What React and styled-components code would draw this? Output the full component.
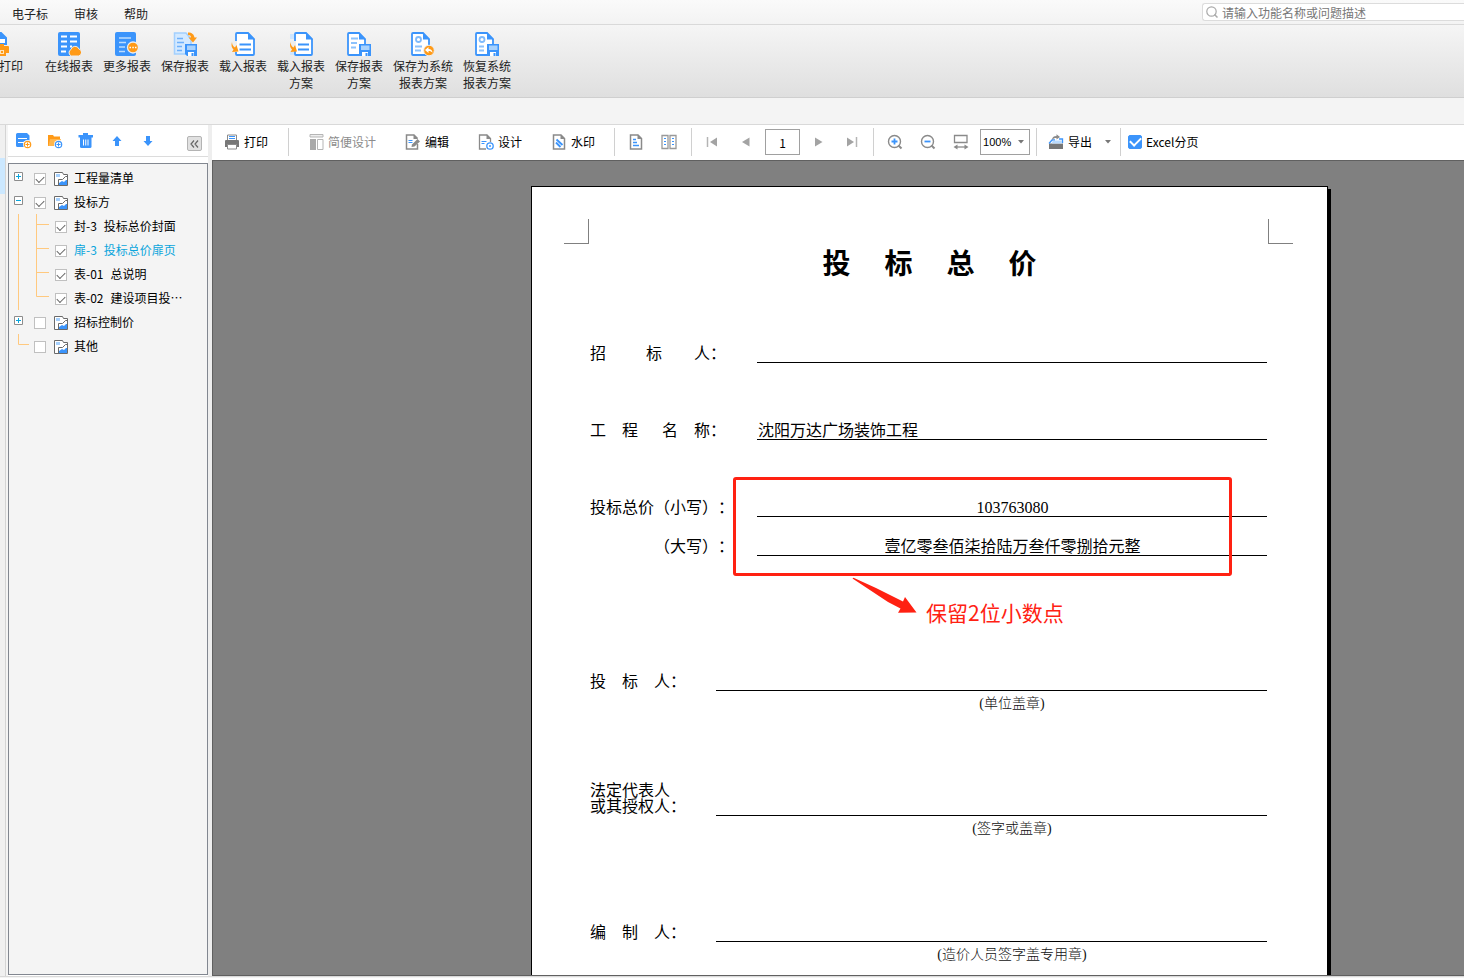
import React, { useState } from 'react';
import styled, { createGlobalStyle } from 'styled-components';

const BLUE = '#3b94fb';
const ORANGE = '#ff9a17';
const GREY = '#8a8a8a';

const GlobalStyle = createGlobalStyle`
  * {
    box-sizing: border-box;
  }

  body {
    margin: 0;
    background: #f4f4f4;
    color: #000;
    font-family: "Noto Sans CJK SC", "Noto Sans", sans-serif;
    font-size: 12px;
  }

  button, input, select {
    margin: 0;
    padding: 0;
    border: 0;
    background: none;
    color: inherit;
    font: inherit;
  }

  svg {
    display: block;
    flex: none;
  }
`;

const ScApp = styled.div`
  display: flex;
  flex-direction: column;
  height: 100vh;
  overflow: hidden;
`;

/* menu bar */

const MenuBar = styled.header`
  display: flex;
  flex: none;
  align-items: center;
  height: 25px;
  padding-left: 12px;
  border-bottom: 1px solid #d9d9d9;
  background: linear-gradient(#fafafa, #f3f3f3);
`;

const MenuNav = styled.nav`
  display: flex;
  gap: 26px;
  padding-top: 4px;
`;

const MenuItem = styled.button`
  line-height: 18px;
  color: #222;
`;

const Search = styled.label`
  display: flex;
  align-items: center;
  gap: 4px;
  width: 262px;
  height: 18px;
  margin-left: auto;
  padding-left: 3px;
  border: 1px solid #dcdcdc;
  border-right: 0;
  border-radius: 3px 0 0 3px;
  background: #fff;

  input {
    flex: 1;
    min-width: 0;
    height: 16px;
    outline: 0;
    &::placeholder {
      color: #777;
    }
  }
`;

/* ribbon */

const Ribbon = styled.div`
  display: flex;
  flex: none;
  height: 73px;
  border-bottom: 1px solid #cfcfcf;
  background: linear-gradient(#f5f5f5, #dfdfdf);
`;

const RibbonButton = styled.button`
  display: flex;
  flex: none;
  flex-direction: column;
  align-items: center;
  gap: 1px;
  width: ${({ $wide }) => ($wide ? '70px' : '58px')};
  padding-top: 7px;
  line-height: 17px;
  color: #222;
  white-space: pre-line;
`;

const CutRibbonButton = styled(RibbonButton)`
  align-items: flex-start;
  width: 41px;
  margin-left: -1px;
`;

const Strip = styled.div`
  flex: none;
  height: 27px;
  border-bottom: 1px solid #d9d9d9;
  background: #f4f4f4;
`;

/* workspace */

const Workspace = styled.main`
  display: flex;
  flex: 1;
  min-height: 0;
`;

const Rail = styled.div`
  flex: none;
  width: 6px;
  margin-right: 2px;
  padding-top: 33px;
  border-right: 1px solid #d4d4d4;
  background: #f0f0f0;

  &::before {
    display: block;
    height: 36px;
    background: #cce8ff;
    content: '';
  }
`;

const Sidebar = styled.aside`
  display: flex;
  flex: none;
  flex-direction: column;
  width: 200px;
  background: #fff;
`;

const SidebarTools = styled.div`
  display: flex;
  align-items: center;
  gap: 15px;
  height: 32px;
  margin-bottom: 6px;
  padding: 0 6px 0 8px;
  border-bottom: 1px solid #dcdcdc;
`;

const CollapseButton = styled.button`
  display: grid;
  place-items: center;
  width: 15px;
  height: 15px;
  margin: 6px 0 0 auto;
  border: 1px solid #b4b4b4;
  border-radius: 2px;
  background: #e1e1e1;
`;

const Tree = styled.ul`
  flex: 1;
  margin: 0 0 1px;
  padding: 2px 0 0;
  border: 1px solid #828790;
  background: #f4f4f4;
  list-style: none;
`;

const TreeRow = styled.li`
  display: flex;
  align-items: center;
  height: 24px;
  color: ${({ $active }) => ($active ? '#0aa5dc' : '#000')};

  > label {
    display: flex;
    align-items: center;
    line-height: 24px;
    white-space: nowrap;
  }
`;

const TreeCheck = styled.input.attrs({ type: 'checkbox' })`
  display: grid;
  flex: none;
  place-items: center;
  width: 12px;
  height: 12px;
  margin-top: 2px;
  border: 1px solid #c0c0c0;
  background: #fff;
  appearance: none;

  &:checked::after {
    width: 7px;
    height: 4px;
    margin-bottom: 2px;
    border: solid #666;
    border-width: 0 0 1px 1px;
    transform: rotate(-45deg);
    content: '';
  }
`;

const GroupName = styled.span`
  display: flex;
  align-items: center;
  gap: 6px;
  padding-left: 8px;

  svg {
    margin-top: 2px;
  }
`;

const SheetName = styled.span`
  display: flex;
  gap: 7px;
  padding-left: 7px;
`;

const Preview = styled.section`
  display: flex;
  flex: 1;
  flex-direction: column;
  min-width: 0;
  border-left: 4px solid #eee;
`;

/* preview toolbar */

const Toolbar = styled.div`
  display: flex;
  flex: none;
  align-items: center;
  height: 35px;
  padding-bottom: 1px;
  background: #fff;
`;

const ToolGroup = styled.div`
  display: flex;
  align-items: center;
  gap: ${({ $gap }) => $gap || 17}px;
  height: 28px;
  padding: ${({ $pad }) => $pad || '0 13px'};
  border-right: 1px solid #d0d0d0;

  &:last-child {
    border-right: 0;
  }
`;

const ToolButton = styled.button`
  display: flex;
  align-items: center;
  gap: 4px;
  line-height: 18px;
  white-space: nowrap;

  &:disabled {
    color: #8c8c8c;
  }
`;

const PageInput = styled.input`
  width: 35px;
  height: 26px;
  margin: 0 -6px;
  border: 1px solid #a0a0a0;
  text-align: center;
`;

const ZoomBox = styled.div`
  display: flex;
  align-items: center;
  width: 50px;
  height: 26px;
  margin-left: -6px;
  padding: 0 5px 0 2px;
  border: 1px solid #a0a0a0;

  select {
    flex: 1;
    min-width: 0;
    outline: 0;
    font-family: "Liberation Sans", sans-serif;
    font-size: 11px;
    appearance: none;
  }

  svg {
    pointer-events: none;
  }
`;

const PagingOption = styled.label`
  display: flex;
  align-items: center;
  gap: 4px;
  line-height: 18px;
  white-space: nowrap;

  input {
    display: grid;
    place-items: center;
    width: 14px;
    height: 14px;
    border: 1px solid ${BLUE};
    border-radius: 2px;
    appearance: none;
  }

  input:checked {
    background: ${BLUE};
  }

  input:checked::after {
    width: 9px;
    height: 5px;
    margin-bottom: 3px;
    border: solid #fff;
    border-width: 0 0 2px 2px;
    transform: rotate(-45deg);
    content: '';
  }
`;

/* report page */

const Canvas = styled.div`
  flex: 1;
  min-height: 0;
  padding: 25px 0 25px 318px;
  overflow: auto;
  border: solid #606060;
  border-width: 1px 0 1px 1px;
  background: #808080;
  scrollbar-width: none;
`;

const Sheet = styled.article`
  position: relative;
  width: 797px;
  min-height: 1123px;
  padding-top: 32px;
  border: 1px solid #000;
  background: #fff;
  box-shadow: 3px 3px 0 #000;
  font-family: "Liberation Serif", "Noto Sans CJK SC", serif;
  font-size: 16px;
  text-spacing-trim: space-all;
`;

const Marks = styled.div`
  display: flex;
  justify-content: space-between;
  padding: 0 34px 0 32px;
`;

const Mark = styled.span`
  width: 25px;
  height: 25px;
  border: solid #808080;
  border-width: ${({ $side }) => ($side === 'left' ? '0 1px 1px 0' : '0 0 1px 1px')};
`;

const Title = styled.h1`
  display: flex;
  justify-content: center;
  gap: 34px;
  margin: 3px 0 60px;
  font-size: 28px;
  font-weight: 700;
  line-height: 36px;
`;

const Form = styled.div`
  padding: 0 60px 0 58px;
`;

const FormRow = styled.div`
  display: grid;
  grid-template-columns: ${({ $signed }) => ($signed ? '126px' : '167px')} 1fr;
  align-items: end;
  min-height: 20px;
  margin-top: ${({ $space }) => $space || 0}px;
`;

const FormLabel = styled.span`
  padding-bottom: 1px;
  line-height: 16px;
  white-space: pre;

  &.indent {
    padding-left: 64px;
  }
`;

const FormValue = styled.span`
  height: 20px;
  padding-left: 1px;
  border-bottom: 1px solid #000;
  line-height: 22px;
  text-align: ${({ $center }) => ($center ? 'center' : 'left')};
`;

const Note = styled.p`
  height: 24px;
  margin: 0;
  padding-left: 167px;
  color: #111;
  font-size: 14px;
  font-weight: 300;
  line-height: 26px;
  text-align: center;
`;

/* the red review marks lie over the report */

const ReviewBox = styled.div`
  position: absolute;
  top: 290px;
  left: 201px;
  width: 499px;
  height: 99px;
  border: 3px solid #ff2112;
  border-radius: 3px;
`;

const ReviewNote = styled.div`
  position: absolute;
  top: 390px;
  left: 320px;
  display: flex;
  gap: 8px;
  color: #ff2112;
  font-family: "Noto Sans CJK SC", sans-serif;
  font-size: 21px;
  line-height: 30px;

  span {
    padding-top: 20px;
  }
`;

const StatusEdge = styled.footer`
  flex: none;
  height: 2px;
  border-top: 1px solid #d9d9d9;
  background: #f4f4f4;
`;

/* 24px ribbon icons */

const Icon24 = ({ children, width = 24, viewBox = '0 0 24 24' }) => (
    <svg width={width} height="24" viewBox={viewBox} fill="none" aria-hidden="true">{children}</svg>
);

const Floppy = () => (
    <g>
        <path d="M12 12h12v12H14l-2-2z" fill={BLUE} />
        <path d="M14 13.500h8.500v4.500H14z" fill="#a8d2fd" />
        <path d="M15 20h6v4h-6z" fill="#fff" />
        <path d="M18.500 21h2v3h-2z" fill={BLUE} />
    </g>
);

const Paper = ({ x = 0, w = 18 }) => (
    <g>
        <path d={`M${x + 2} 1h${w - 8}l6 6v15a1 1 0 0 1-1 1h-${w - 3}a1 1 0 0 1-1-1V2a1 1 0 0 1 1-1z`} fill="#fff" stroke={BLUE} strokeWidth="1.800" />
        <path d={`M${x + w - 6} 0.500v7h7z`} fill={BLUE} />
    </g>
);

const LoadArrow = ({ x = 0 }) => (
    <path d={`M${x + 0.5} 10c0 3 1.500 4.500 3 5.500l1.500-2.500 2 6.500-6.500.5 1.500-2.500C${x} 16 ${x - 0.5} 13 ${x + 0.5} 10z`} fill={ORANGE} />
);

const PrintIcon = () => (
    <Icon24 width={11} viewBox="13 0 11 24">
        <path d="M4 1h11l5 5v6H4z" fill="#fff" stroke={BLUE} strokeWidth="2" />
        <path d="M14 0v7h7z" fill={BLUE} />
        <path d="M4 12h14v2h4a1 1 0 0 1 1 1v6h-3v3H4z" fill={ORANGE} />
        <path d="M8 18h10v4H8z" fill="#ffe3b8" />
        <path d="M15 19h2v2h-2z" fill={ORANGE} />
    </Icon24>
);

const OnlineIcon = () => (
    <Icon24>
        <rect x="1" width="22" height="24" rx="2" fill={BLUE} />
        <path d="M4 4.500h6M13 4.500h7M4 9.500h6M13 9.500h7M4 14.500h6M4 19.500h5M13 14.500h2" stroke="#fff" strokeWidth="2" />
        <path d="M14.500 24a3.500 3.500 0 0 1-.5-6.500 4.200 4.200 0 0 1 8-.5 3.600 3.600 0 0 1-.5 7z" fill={ORANGE} stroke="#eee" strokeWidth="1" />
    </Icon24>
);

const MoreIcon = () => (
    <Icon24>
        <rect width="21" height="24" rx="2" fill={BLUE} />
        <path d="M4 6h12M4 10.500h7M4 15h6M4 19.500h6" stroke="#bcdcfe" strokeWidth="1.500" />
        <circle cx="18" cy="15.500" r="5.500" fill={ORANGE} stroke="#eee" strokeWidth="1.300" />
        <path d="M14.500 15.500h1.500M17.300 15.500h1.500M20 15.500h1.500" stroke="#fff" strokeWidth="1.600" />
    </Icon24>
);

const SaveReportIcon = () => (
    <Icon24>
        <path d="M1.500 1H13l5 6v15H1.500z" fill="#d3e9ff" stroke="#a3d0fe" strokeWidth="1.500" />
        <path d="M4 6.500h6M4 10.500h7M4 14.500h5M4 18.500h5" stroke="#6db0fb" strokeWidth="1.500" />
        <path d="M15 .5c4 0 6 2 6.500 5H24L20 10.500 15.500 5.500H18c-.3-1.800-1-2.500-3-2.500z" fill={ORANGE} />
        <Floppy />
    </Icon24>
);

const LoadReportIcon = () => (
    <Icon24>
        <Paper x={4} w={19} />
        <path d="M8.500 12.500H20M8.500 17.500H20" stroke={BLUE} strokeWidth="1.800" />
        <path d="M0 9h6v11H0z" fill="#eee" />
        <LoadArrow x={0.5} />
    </Icon24>
);

const LoadPlanIcon = () => (
    <Icon24>
        <path d="M1 2h4v5H1zM1 20h5v3H1z" fill="#cfe6fe" />
        <Paper x={5} w={18} />
        <path d="M9 12.500h11M9 17.500h11" stroke={BLUE} strokeWidth="1.800" />
        <path d="M1 9h6v10H1z" fill="#eee" />
        <LoadArrow x={1} />
    </Icon24>
);

const SavePlanIcon = () => (
    <Icon24>
        <Paper />
        <path d="M4 6.500h7M4 11h6M4 15.500h5" stroke="#8cc2fc" strokeWidth="1.800" />
        <Floppy />
    </Icon24>
);

const SaveSystemIcon = () => (
    <Icon24>
        <Paper />
        <circle cx="7.500" cy="7.500" r="2.500" stroke="#7fbafb" strokeWidth="1.800" />
        <path d="M4 14.500h7M4 18.500h6" stroke="#8cc2fc" strokeWidth="1.800" />
        <circle cx="18" cy="18.500" r="5.300" fill={ORANGE} stroke="#eee" />
        <path d="M14 18l3.500-3v2c2.500 0 4 1.500 4 4-1-1.500-2-2-4-2v2z" fill="#fff" />
    </Icon24>
);

const RestoreIcon = () => (
    <Icon24>
        <Paper />
        <circle cx="7" cy="7.500" r="2.500" stroke="#7fbafb" strokeWidth="1.800" />
        <path d="M4 14.500h5M4 18.500h5" stroke="#8cc2fc" strokeWidth="1.800" />
        <Floppy />
    </Icon24>
);

/* 16px toolbar icons */

const Icon16 = ({ children }) => (
    <svg width="16" height="16" viewBox="0 0 16 16" fill="none" aria-hidden="true">{children}</svg>
);

const GreyPaper = () => (
    <g>
        <path d="M2.500 1h7.500l3.500 3.500V15h-11z" stroke={GREY} strokeWidth="1.500" />
        <path d="M9.500.5v4.500H14z" fill={GREY} />
    </g>
);

const icons = {
    addReport: (
        <Icon16>
            <path d="M0 1.500A1.500 1.500 0 0 1 1.500 0H11l2.500 2.500V14H1.500A1.500 1.500 0 0 1 0 12.500z" fill={BLUE} />
            <path d="M2 5.500h9M2 9.500h6" stroke="#fff" />
            <circle cx="11.500" cy="11.500" r="4.500" fill="#fff" />
            <circle cx="11.500" cy="11.500" r="3.200" fill="#fff" stroke={ORANGE} strokeWidth="1.200" />
            <path d="M9.500 11.500h4M11.500 9.500v4" stroke={ORANGE} />
        </Icon16>
    ),
    addFolder: (
        <Icon16>
            <path d="M1 2h5l1 1.500h6V13H1z" fill={ORANGE} />
            <path d="M3 6h11l-2 7H1.500z" fill="#ffb64d" />
            <circle cx="11.500" cy="11.500" r="4.500" fill="#fff" />
            <circle cx="11.500" cy="11.500" r="3.200" fill="#fff" stroke={BLUE} strokeWidth="1.200" />
            <path d="M9.500 11.500h4M11.500 9.500v4" stroke={BLUE} />
        </Icon16>
    ),
    trash: (
        <Icon16>
            <path d="M5 0h5v2h5v2.500H.5V2H5z" fill={BLUE} />
            <path d="M2 4h11.500v9.500a1.500 1.500 0 0 1-1.500 1.500H3.500A1.500 1.500 0 0 1 2 13.500z" fill={BLUE} />
            <path d="M5.500 6.500v6M7.750 6.500v6M10 6.500v6" stroke="#fff" />
        </Icon16>
    ),
    up: (
        <Icon16>
            <path d="M8 3l4.500 5H10v5H6V8H3.500z" fill={BLUE} />
        </Icon16>
    ),
    down: (
        <Icon16>
            <path d="M8 13l4.500-5H10V3H6v5H3.500z" fill={BLUE} />
        </Icon16>
    ),
    print: (
        <Icon16>
            <path d="M3.500 6V1h9v5" fill="#fff" stroke={GREY} />
            <path d="M5 2.500h6M5 4.500h6" stroke={BLUE} />
            <path d="M1 7a1 1 0 0 1 1-1h12a1 1 0 0 1 1 1v6H1z" fill="#777" />
            <path d="M3.500 10.500h9v4.500h-9z" fill="#fff" stroke={GREY} />
        </Icon16>
    ),
    layout: (
        <Icon16>
            <path d="M2 .5h13v2.500H2z" fill="#eee" stroke="#b5b5b5" />
            <path d="M2 5h6v11H2z" fill="#a9a9a9" />
            <path d="M9.500 5.500H15v10H9.500z" stroke="#b5b5b5" />
        </Icon16>
    ),
    edit: (
        <Icon16>
            <path d="M12.500 10v5h-11V1H9l3.500 3.500" stroke={GREY} strokeWidth="1.500" />
            <path d="M8.500.5V5H13z" fill={GREY} />
            <path d="M3.500 6.500h4M3.500 8.500h4" stroke={BLUE} />
            <path d="M6.500 13l.5-2.500L12.500 5 15 7.500 9.500 12.500z" fill={GREY} />
        </Icon16>
    ),
    design: (
        <Icon16>
            <path d="M8 15H1.500V1H9l3.500 3.500V8" stroke={GREY} strokeWidth="1.300" />
            <path d="M8.500.5V5H13z" fill={GREY} />
            <path d="M3.500 7.500h5M3.500 9.500h3" stroke={BLUE} />
            <circle cx="12" cy="12" r="3.200" stroke={BLUE} strokeWidth="1.300" />
            <circle cx="12" cy="12" r="1" fill={BLUE} />
        </Icon16>
    ),
    watermark: (
        <Icon16>
            <GreyPaper />
            <path d="M5.500 5.500l6 5.500M5 8.500l4.500 4.500" stroke={BLUE} strokeWidth="1.900" />
        </Icon16>
    ),
    single: (
        <Icon16>
            <GreyPaper />
            <path d="M5 5.500h3M5 8.500h4M5 11.500h6" stroke={BLUE} strokeWidth="1.500" />
        </Icon16>
    ),
    dual: (
        <Icon16>
            <path d="M1 1.500h6v13H1zM9 1.500h6v13H9z" stroke="#999" strokeWidth="1.300" />
            <path d="M3 4.500h2M3 7.500h2M3 10.500h2M11 4.500h2M11 7.500h2M11 10.500h2" stroke={BLUE} strokeWidth="1.200" />
        </Icon16>
    ),
    first: (
        <Icon16>
            <path d="M2.500 3v10" stroke="#b4b4b4" strokeWidth="1.500" />
            <path d="M12 3.500v9L5 8z" fill="#a3a3a3" />
        </Icon16>
    ),
    prev: (
        <Icon16>
            <path d="M11.500 3.500v9L4 8z" fill="#a3a3a3" />
        </Icon16>
    ),
    next: (
        <Icon16>
            <path d="M4 3.500v9L11.500 8z" fill="#a3a3a3" />
        </Icon16>
    ),
    last: (
        <Icon16>
            <path d="M12.500 3v10" stroke="#b4b4b4" strokeWidth="1.500" />
            <path d="M3 3.500v9L10 8z" fill="#a3a3a3" />
        </Icon16>
    ),
    zoomIn: (
        <Icon16>
            <circle cx="7.500" cy="7.500" r="6" stroke={GREY} strokeWidth="1.400" />
            <path d="M11.500 11.500l3 3" stroke={GREY} strokeWidth="2" />
            <path d="M4.500 7.500h6M7.500 4.500v6" stroke={BLUE} strokeWidth="1.800" />
        </Icon16>
    ),
    zoomOut: (
        <Icon16>
            <circle cx="7.500" cy="7.500" r="6" stroke={GREY} strokeWidth="1.400" />
            <path d="M11.500 11.500l3 3" stroke={GREY} strokeWidth="2" />
            <path d="M4.500 7.500h6" stroke={BLUE} strokeWidth="1.800" />
        </Icon16>
    ),
    fit: (
        <Icon16>
            <path d="M1.500 1.500h12.500v7H1.500z" stroke={GREY} strokeWidth="1.300" />
            <path d="M3 13h10" stroke={GREY} strokeWidth="1.300" />
            <path d="M.5 13l4-2.500v5zM15.500 13l-4-2.500v5z" fill={GREY} />
        </Icon16>
    ),
    exportFile: (
        <Icon16>
            <path d="M1 9.500h14V15H1z" fill="#777" />
            <path d="M1 9.500L4 6h3M14.500 9V5H11" stroke={BLUE} strokeWidth="1.300" />
            <path d="M4 8.500l1-2h9v3H4z" fill="#b9dafd" />
            <path d="M4 6c0-2.500 1.500-4 4.500-4V.2L12 3 8.500 5.500V4C6.500 4 5.500 4.500 4 6z" fill={GREY} />
        </Icon16>
    ),
};

const Caret = () => (
    <svg width="6" height="4" viewBox="0 0 6 4" aria-hidden="true">
        <path d="M0 0h6L3 3.500z" fill="#777" />
    </svg>
);

const GroupIcon = () => (
    <svg width="14" height="14" viewBox="0 0 14 14" fill="none" aria-hidden="true">
        <path d="M.5 .5h8l1 2h4v11H.5z" fill="#fff" stroke="#6a6a6a" />
        <path d="M2 2h4v3H2z" fill="#a5d0fd" />
        <path d="M4.500 13V7.500h4l3-3H13" stroke="#6a6a6a" />
        <path d="M5 13v-2l3-2 2 1 2-2h1v5z" fill={BLUE} />
    </svg>
);

const Branch = ({ type }) => (
    <svg width="25" height="24" viewBox="0 0 25 24" fill="none" aria-hidden="true">
        {(type === 'plus' || type === 'minus') && (
            <g>
                <path d="M5.500 6.500h8v8h-8z" fill="#fff" stroke="#8c8c8c" />
                <path d={type === 'plus' ? 'M7 10.500h5M9.500 8v5' : 'M7 10.500h5'} stroke="#0aa5dc" />
            </g>
        )}
        {type === 'line' && <path d="M9.500 0v24" stroke="#ffc97f" />}
        {type === 'elbow' && <path d="M9.500 0v10.500H20" stroke="#ffc97f" />}
    </svg>
);

const SubBranch = ({ last }) => (
    <svg width="21" height="24" viewBox="0 0 21 24" fill="none" aria-hidden="true">
        <path d={last ? 'M2.500 0v10.500H15' : 'M2.500 0v24M2.500 10.500H15'} stroke="#ffc97f" />
    </svg>
);

const ribbonItems = [
    { label: '在线报表', icon: <OnlineIcon /> },
    { label: '更多报表', icon: <MoreIcon /> },
    { label: '保存报表', icon: <SaveReportIcon /> },
    { label: '载入报表', icon: <LoadReportIcon /> },
    { label: '载入报表\n方案', icon: <LoadPlanIcon /> },
    { label: '保存报表\n方案', icon: <SavePlanIcon /> },
    { label: '保存为系统\n报表方案', icon: <SaveSystemIcon />, wide: true },
    { label: '恢复系统\n报表方案', icon: <RestoreIcon /> },
];

const treeItems = [
    { name: '工程量清单', branch: 'plus', checked: true },
    { name: '投标方', branch: 'minus', checked: true },
    { code: '封-3', name: '投标总价封面', checked: true },
    { code: '扉-3', name: '投标总价扉页', checked: true, active: true },
    { code: '表-01', name: '总说明', checked: true },
    { code: '表-02', name: '建设项目投…', checked: true, last: true },
    { name: '招标控制价', branch: 'plus', checked: false },
    { name: '其他', branch: 'elbow', checked: false },
];

const IconButton = ({ icon, label }) => (
    <ToolButton type="button" aria-label={label}>{icons[icon]}</ToolButton>
);

const TreeItem = ({ item }) => {
    const [checked, setChecked] = useState(item.checked);
    const box = <TreeCheck checked={checked} onChange={() => setChecked(!checked)} />;

    if (item.code) {
        return (
            <TreeRow $active={item.active}>
                <Branch type="line" />
                <SubBranch last={item.last} />
                <label>
                    {box}
                    <SheetName><span>{item.code}</span><span>{item.name}</span></SheetName>
                </label>
            </TreeRow>
        );
    }
    return (
        <TreeRow>
            <Branch type={item.branch} />
            <label>
                {box}
                <GroupName><GroupIcon />{item.name}</GroupName>
            </label>
        </TreeRow>
    );
};

const ReportSheet = () => (
    <Sheet>
        <Marks>
            <Mark $side="left" />
            <Mark $side="right" />
        </Marks>
        <Title><span>投</span><span>标</span><span>总</span><span>价</span></Title>
        <Form>
            <FormRow>
                <FormLabel>{'招\u3000\u3000  标\u3000\u3000人：'}</FormLabel>
                <FormValue />
            </FormRow>
            <FormRow $space={57}>
                <FormLabel>{'工\u3000程\u3000  名\u3000称：'}</FormLabel>
                <FormValue>沈阳万达广场装饰工程</FormValue>
            </FormRow>
            <FormRow $space={57}>
                <FormLabel>投标总价（小写）：</FormLabel>
                <FormValue $center>103763080</FormValue>
            </FormRow>
            <FormRow $space={19}>
                <FormLabel className="indent">（大写）：</FormLabel>
                <FormValue $center>壹亿零叁佰柒拾陆万叁仟零捌拾元整</FormValue>
            </FormRow>
            <FormRow $signed $space={115}>
                <FormLabel>{'投\u3000标\u3000人：'}</FormLabel>
                <FormValue />
            </FormRow>
            <Note>(单位盖章)</Note>
            <FormRow $signed $space={68}>
                <FormLabel>{'法定代表人\n或其授权人：'}</FormLabel>
                <FormValue />
            </FormRow>
            <Note>(签字或盖章)</Note>
            <FormRow $signed $space={82}>
                <FormLabel>{'编\u3000制\u3000人：'}</FormLabel>
                <FormValue />
            </FormRow>
            <Note>(造价人员签字盖专用章)</Note>
        </Form>
        <ReviewBox />
        <ReviewNote>
            <svg width="66" height="37" viewBox="0 0 66 37" aria-hidden="true">
                <path d="M.5 1.500L1.500 .8 24 11 51 24.500l2-4.500 11.500 15.500-18.500 .3 2.500-4.300L36 25z" fill="#ff2112" />
            </svg>
            <span>保留2位小数点</span>
        </ReviewNote>
    </Sheet>
);

const App = () => {
    const [page, setPage] = useState('1');
    const [paging, setPaging] = useState(true);

    return (
        <ScApp>
            <GlobalStyle />
            <MenuBar>
                <MenuNav>
                    <MenuItem type="button">电子标</MenuItem>
                    <MenuItem type="button">审核</MenuItem>
                    <MenuItem type="button">帮助</MenuItem>
                </MenuNav>
                <Search>
                    <svg width="12" height="12" viewBox="0 0 12 12" fill="none" aria-hidden="true">
                        <circle cx="5.500" cy="5.500" r="4.700" stroke="#aaa" strokeWidth="1.200" />
                        <path d="M8.500 8.500l3 3" stroke="#aaa" strokeWidth="1.500" />
                    </svg>
                    <input type="text" aria-label="搜索" placeholder="请输入功能名称或问题描述" />
                </Search>
            </MenuBar>
            <Ribbon>
                <CutRibbonButton type="button"><PrintIcon />打印</CutRibbonButton>
                {ribbonItems.map(({ label, icon, wide }) => (
                    <RibbonButton key={label} type="button" $wide={wide}>{icon}{label}</RibbonButton>
                ))}
            </Ribbon>
            <Strip />
            <Workspace>
                <Rail />
                <Sidebar>
                    <SidebarTools>
                        <IconButton icon="addReport" label="新建报表" />
                        <IconButton icon="addFolder" label="新建文件夹" />
                        <IconButton icon="trash" label="删除" />
                        <IconButton icon="up" label="上移" />
                        <IconButton icon="down" label="下移" />
                        <CollapseButton type="button" aria-label="收起">
                            <svg width="9" height="8" viewBox="0 0 9 8" fill="none" aria-hidden="true">
                                <path d="M4 .5L1 4l3 3.500M8 .5L5 4l3 3.500" stroke="#666" strokeWidth="1.200" />
                            </svg>
                        </CollapseButton>
                    </SidebarTools>
                    <Tree>
                        {treeItems.map((item) => <TreeItem key={item.name} item={item} />)}
                    </Tree>
                </Sidebar>
                <Preview>
                    <Toolbar>
                        <ToolGroup $pad="0 20px 0 12px">
                            <ToolButton type="button">{icons.print}打印</ToolButton>
                        </ToolGroup>
                        <ToolGroup $gap={29} $pad="0 19px">
                            <ToolButton type="button" disabled>{icons.layout}简便设计</ToolButton>
                            <ToolButton type="button">{icons.edit}编辑</ToolButton>
                            <ToolButton type="button">{icons.design}设计</ToolButton>
                            <ToolButton type="button">{icons.watermark}水印</ToolButton>
                        </ToolGroup>
                        <ToolGroup $pad="0 14px 0 13px">
                            <IconButton icon="single" label="单页" />
                            <IconButton icon="dual" label="双页" />
                        </ToolGroup>
                        <ToolGroup>
                            <IconButton icon="first" label="首页" />
                            <IconButton icon="prev" label="上一页" />
                            <PageInput type="text" aria-label="页码" value={page} onChange={(e) => setPage(e.target.value)} />
                            <IconButton icon="next" label="下一页" />
                            <IconButton icon="last" label="末页" />
                        </ToolGroup>
                        <ToolGroup $pad="0 6px 0 13px">
                            <IconButton icon="zoomIn" label="放大" />
                            <IconButton icon="zoomOut" label="缩小" />
                            <IconButton icon="fit" label="适合宽度" />
                            <ZoomBox>
                                <select aria-label="缩放比例" defaultValue="100%">
                                    <option>50%</option>
                                    <option>100%</option>
                                    <option>200%</option>
                                </select>
                                <Caret />
                            </ZoomBox>
                        </ToolGroup>
                        <ToolGroup $gap={13} $pad="0 9px 0 11px">
                            <ToolButton type="button">{icons.exportFile}导出</ToolButton>
                            <ToolButton type="button" aria-label="导出选项"><Caret /></ToolButton>
                        </ToolGroup>
                        <ToolGroup $pad="0 7px">
                            <PagingOption>
                                <input type="checkbox" checked={paging} onChange={() => setPaging(!paging)} />
                                Excel分页
                            </PagingOption>
                        </ToolGroup>
                    </Toolbar>
                    <Canvas>
                        <ReportSheet />
                    </Canvas>
                </Preview>
            </Workspace>
            <StatusEdge />
        </ScApp>
    );
};

export default App;
